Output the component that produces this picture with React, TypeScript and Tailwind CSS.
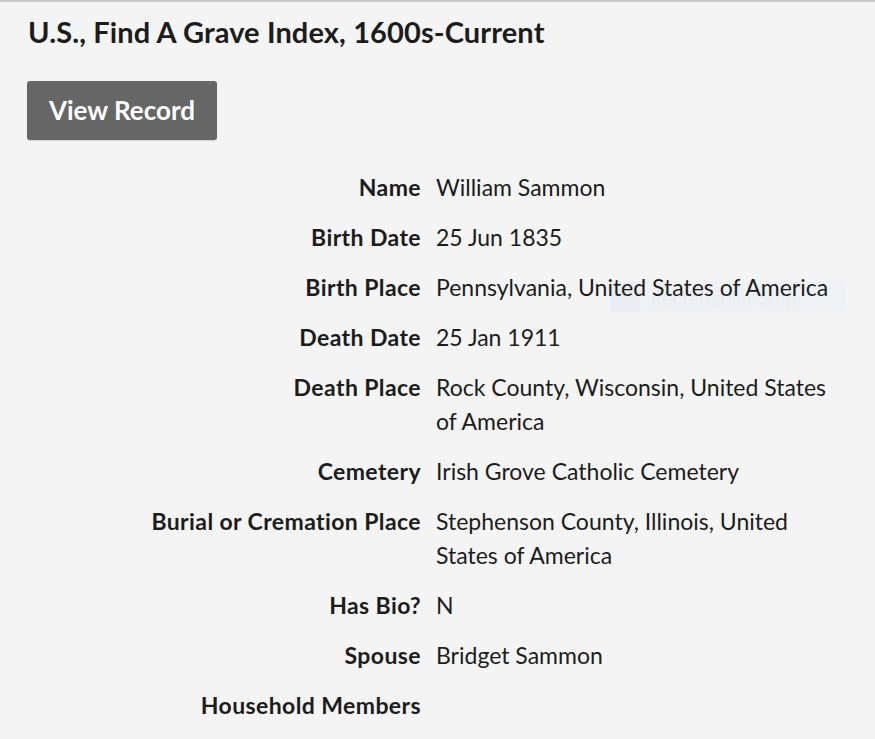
import React from "react";

const rows: [string, string][] = [
  ["Name", "William Sammon"],
  ["Birth Date", "25 Jun 1835"],
  ["Birth Place", "Pennsylvania, United States of America"],
  ["Death Date", "25 Jan 1911"],
  ["Death Place", "Rock County, Wisconsin, United States of America"],
  ["Cemetery", "Irish Grove Catholic Cemetery"],
  ["Burial or Cremation Place", "Stephenson County, Illinois, United States of America"],
  ["Has Bio?", "N"],
  ["Spouse", "Bridget Sammon"],
  ["Household Members", ""],
];

export default function App() {
  return (
    <div
      className="relative min-h-screen bg-[#f4f4f4] border-t-2 border-[#c9c9c9] pl-[27px] text-[#1c1c1c]"
      style={{ fontFamily: "Lato, 'Noto Sans', sans-serif" }}
    >
      <div className="pointer-events-none absolute left-[610px] top-[279px] flex h-[32px] w-[235px] items-center gap-[10px] rounded-[2px] bg-[#eff1f4]">
        <div className="h-[30px] w-[30px] bg-[#eaedf2]" />
        <span className="text-[20px] text-[#e9ecf0]">Rectangular Snip</span>
      </div>
      <h1 className="relative pt-[13px] text-[29px] font-bold leading-[34px] pl-[1px] tracking-[0.12px]">
        U.S., Find A Grave Index, 1600s-Current
      </h1>
      <button className="mt-[32px] h-[59px] w-[190px] rounded-[3px] bg-[#666666] text-white text-[26px] font-bold shadow-[0_1px_1px_rgba(0,0,0,0.15)]">
        View Record
      </button>
      <div className="relative mt-[30px] flex flex-col gap-[16px]">
        {rows.map(([k, v]) => (
          <div key={k} className="flex text-[23px] leading-[34px]">
            <div className="w-[394px] shrink-0 text-right font-bold tracking-[0.4px]">{k}</div>
            <div className="ml-[15px] w-[396px]">{v}</div>
          </div>
        ))}
      </div>
    </div>
  );
}
